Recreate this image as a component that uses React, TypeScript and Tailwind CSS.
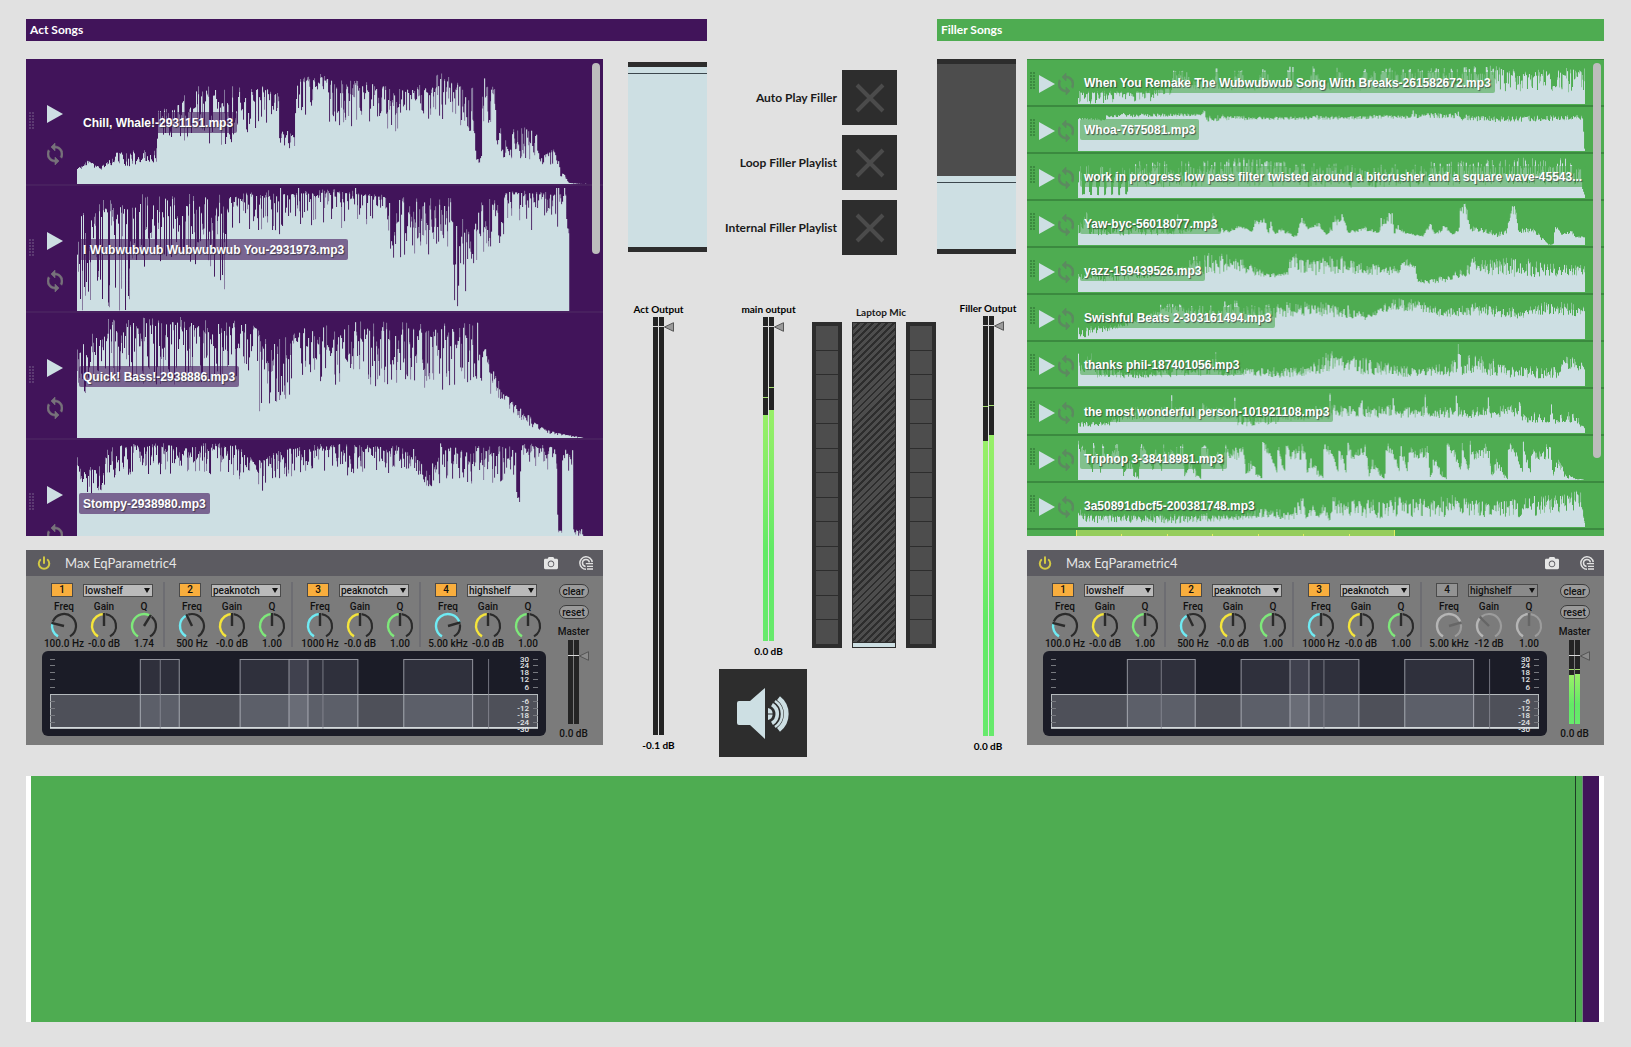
import React from "react";
import { FaCamera } from "react-icons/fa";
import { Power } from "lucide-react";

/* ---------- waveforms ---------- */

// [x, lowest level, highest level, dip rarity]
type Point = [number, number, number, number?];

function noise(seed: number) {
  let s = seed * 7919 + 13;
  return () => {
    s = (s * 1664525 + 1013904223) % 4294967296;
    return s / 4294967296;
  };
}

function Waveform({ points, seed, w, h, rarity, className }: { points: Point[]; seed: number; w: number; h: number; rarity: number; className: string }) {
  const rnd = noise(seed);
  const step = 2.53;
  let solid = `M0 ${h}`;
  let soft = `M0 ${h}`;
  let k = 0;
  for (let x = 0; x < w; x += step) {
    while (k < points.length - 2 && points[k + 1][0] <= x) k++;
    const a = points[k];
    const b = points[k + 1];
    const t = b[0] === a[0] ? 1 : Math.min(1, Math.max(0, (x - a[0]) / (b[0] - a[0])));
    const lo = a[1] + (b[1] - a[1]) * t;
    const hi = a[2] + (b[2] - a[2]) * t;
    const r = Math.pow(rnd(), a[3] ?? rarity);
    const spike = hi > h * 0.2 && rnd() > 0.975 ? 1.1 : 1;
    const level = Math.min(h, (hi - (hi - lo) * (0.08 + 0.92 * r)) * spike);
    const haze = level + Math.max(0, hi - level) * (rnd() > 0.6 ? rnd() : 0);
    const x1 = x.toFixed(1);
    const x2 = Math.min(w, x + step).toFixed(1);
    solid += `L${x1} ${(h - level).toFixed(1)}L${x2} ${(h - level).toFixed(1)}`;
    soft += `L${x1} ${(h - haze).toFixed(1)}L${x2} ${(h - haze).toFixed(1)}`;
  }
  return (
    <svg className={className} viewBox={`0 0 ${w} ${h}`} preserveAspectRatio="none" aria-hidden="true">
      <path d={`${soft}L${w} ${h}Z`} fill="#cddfe3" opacity="0.5" />
      <path d={`${solid}L${w} ${h}Z`} fill="#cddfe3" />
    </svg>
  );
}

type Song = { title: string; points: Point[] };

const actSongs: Song[] = [
  {
    title: "Chill, Whale!-2931151.mp3",
    points: [
      [0, 35, 50], [28, 55, 72], [58, 40, 50], [80, 55, 72], [100, 50, 100, 0.7], [202, 60, 110, 0.7], [203, 140, 225], [250, 140, 230],
      [254, 130, 290, 1.2], [400, 110, 300, 1.2], [410, 200, 290], [440, 110, 290], [470, 200, 300], [508, 120, 280], [512, 100, 155], [549, 105, 150],
      [552, 210, 310], [608, 190, 335], [680, 170, 310], [765, 180, 310], [805, 150, 280], [808, 100, 290], [818, 130, 290], [822, 220, 290],
      [885, 180, 300], [898, 220, 340], [904, 220, 369], [910, 200, 340], [1000, 150, 290], [1008, 60, 75], [1022, 60, 80], [1025, 160, 300], [1057, 200, 290],
      [1060, 70, 150], [1075, 70, 180, 0.8], [1165, 60, 180, 1], [1168, 50, 80], [1205, 60, 105], [1217, 50, 75], [1222, 22, 35], [1232, 20, 30],
      [1240, 4, 8], [1250, 1, 3], [1265, 0, 1], [1300, 0, 0],
    ],
  },
  {
    title: "I Wubwubwub Wubwubwub You-2931973.mp3",
    points: [
      [0, 0, 305, 1.4], [40, 0, 330, 1.4], [140, 0, 350, 1.4], [142, 130, 350, 1], [280, 140, 365, 1.1], [376, 60, 360, 2.2], [378, 250, 355, 1.8],
      [470, 230, 365, 2], [500, 180, 360, 2], [525, 250, 360, 2.5], [655, 250, 366, 3], [780, 240, 350, 2], [785, 150, 350, 1.1], [945, 180, 340, 1.2],
      [948, 0, 335, 1.3], [990, 40, 250, 1], [992, 120, 210, 1], [1020, 170, 340, 0.9], [1078, 150, 340, 1.1], [1082, 240, 368, 2.4], [1236, 240, 355, 2],
      [1238, 230, 260], [1243, 230, 250], [1244, 0, 0], [1300, 0, 0],
    ],
  },
  {
    title: "Quick! Bass!-2938886.mp3",
    points: [
      [0, 120, 280], [30, 120, 260], [35, 170, 360, 1.2], [100, 150, 364, 1.3], [440, 170, 364, 1.5], [452, 180, 360], [462, 60, 300, 1.1],
      [500, 100, 300, 0.9], [540, 110, 310, 1.2], [565, 180, 345, 1.1], [710, 130, 350, 1.2], [850, 160, 350, 1.1], [880, 130, 345, 1.2], [1000, 170, 345, 1.1],
      [1018, 160, 330], [1045, 120, 230], [1070, 110, 160], [1100, 70, 110], [1135, 45, 80], [1160, 22, 45], [1185, 15, 26], [1235, 4, 10], [1276, 0, 2],
      [1280, 0, 0], [1300, 0, 0],
    ],
  },
  {
    title: "Stompy-2938980.mp3",
    points: [
      [0, 280, 325], [12, 220, 290], [60, 210, 300], [80, 240, 360, 1.2], [110, 270, 366, 1.8], [400, 270, 366, 1.8], [430, 230, 330], [470, 220, 320],
      [520, 260, 355, 1.6], [600, 260, 364, 1.7], [820, 270, 362, 1.7], [850, 240, 330], [900, 230, 310], [930, 240, 362, 1.3], [1108, 240, 362, 1.6],
      [1110, 180, 230], [1120, 190, 240], [1122, 280, 366, 1.8], [1212, 280, 360], [1215, 85, 105], [1226, 85, 105], [1227, 280, 350], [1253, 280, 350],
      [1255, 85, 105], [1281, 85, 115], [1283, 0, 0], [1300, 0, 0],
    ],
  },
];

const pulses = (from: number, to: number, gap: number, lo: number, hi: number, top: number): Point[] => {
  const out: Point[] = [];
  for (let x = from; x < to; x += gap) out.push([x, lo, hi], [x + gap * 0.6, lo, hi], [x + gap * 0.65, lo + 10, top], [x + gap * 0.95, lo + 10, top]);
  return out;
};

const beats = (from: number, to: number): Point[] => {
  const out: Point[] = [];
  for (let x = from; x < to; x += 155) {
    out.push([x, 90, 118], [x + 18, 70, 95], [x + 36, 20, 30], [x + 38, 80, 120], [x + 43, 60, 90], [x + 56, 20, 25], [x + 59, 80, 120], [x + 70, 60, 85]);
    out.push([x + 95, 60, 110], [x + 108, 60, 110], [x + 113, 8, 12], [x + 120, 20, 75], [x + 130, 30, 60], [x + 142, 6, 30], [x + 154, 2, 4]);
  }
  return out;
};

const fillerSongs: Song[] = [
  {
    title: "When You Remake The Wubwubwub Song With Breaks-261582672.mp3",
    points: [
      [0, 0, 40, 1.8], [170, 2, 40, 1.6], [232, 20, 50], [240, 50, 110], [255, 60, 120], [275, 60, 118], [280, 45, 70], ...pulses(290, 720, 64, 40, 70, 120),
      [740, 40, 110, 1], [900, 50, 112, 1], [1040, 40, 118, 1.2], [1120, 35, 100, 1.2], [1280, 35, 112, 1.2],
    ],
  },
  {
    title: "Whoa-7675081.mp3",
    points: [
      [0, 94, 100], [68, 90, 96], [70, 100, 112], [310, 104, 114], [318, 105, 126], [324, 88, 114], [440, 92, 104], [680, 94, 106], [870, 98, 114],
      [950, 98, 116], [957, 105, 128], [970, 90, 108], [1080, 86, 106], [1272, 92, 108], [1275, 60, 60], [1278, 0, 0], [1280, 0, 0],
    ],
  },
  {
    title: "work in progress low pass filter twisted around a bitcrusher and a square wave-45543...",
    points: [
      ...[0, 1, 2, 3, 4, 5, 6].flatMap((i): Point[] => [[i * 18, 40, 100], [i * 18 + 9, 50, 105], [i * 18 + 10, 8, 12], [i * 18 + 15, 8, 12]]),
      [126, 30, 110, 0.9], [420, 35, 122, 0.9], [700, 30, 100, 0.9], [960, 35, 112, 0.9], [1200, 40, 125, 0.9], [1268, 40, 105], [1272, 20, 30], [1280, 4, 6],
    ],
  },
  {
    title: "Yaw-byc-56018077.mp3",
    points: [
      [0, 30, 110], [6, 40, 60], [22, 60, 110], [28, 30, 60], [100, 25, 60], [240, 30, 60], [250, 40, 110], [256, 30, 50], [330, 40, 80], [340, 60, 110],
      [352, 35, 60], [380, 35, 45], [405, 50, 60], [440, 38, 42], [445, 60, 84], [470, 65, 84], [480, 30, 40], [486, 60, 75], [495, 28, 34], [510, 40, 55],
      [550, 20, 28], [563, 70, 90], [580, 45, 52], [608, 55, 70], [625, 28, 32], [645, 45, 90], [668, 70, 98], [680, 35, 40], [725, 40, 60], [760, 35, 40],
      [765, 55, 100], [792, 60, 100], [797, 30, 40], [807, 45, 65], [820, 35, 42], [870, 22, 28], [888, 55, 72], [900, 28, 35], [928, 45, 62], [945, 28, 32],
      [960, 40, 60], [965, 80, 130], [980, 80, 126], [990, 40, 60], [1060, 22, 40], [1080, 30, 45], [1086, 70, 125], [1104, 80, 120], [1112, 35, 55],
      [1150, 35, 50], [1175, 8, 20], [1186, 0, 3], [1199, 0, 2], [1203, 45, 72], [1220, 28, 34], [1243, 35, 50], [1255, 22, 26], [1280, 20, 26],
    ],
  },
  {
    title: "yazz-159439526.mp3",
    points: [
      [0, 40, 70], [60, 30, 60], [270, 50, 80], [285, 55, 110], [320, 50, 120], [400, 60, 110], [440, 45, 80], [480, 42, 58], [525, 45, 60], [535, 60, 118],
      [600, 50, 105], [660, 55, 110], [740, 50, 90], [810, 50, 75], [820, 80, 108], [850, 70, 80], [856, 24, 36], [920, 26, 50], [960, 40, 68], [990, 50, 90],
      [995, 70, 128], [1005, 50, 98], [1100, 45, 108], [1200, 45, 85], [1280, 50, 92],
    ],
  },
  {
    title: "Swishful Beats 2-303161494.mp3",
    points: [
      [0, 5, 40], [20, 4, 38], [95, 30, 45], [200, 60, 90], [210, 80, 112], [300, 60, 100], [385, 65, 110], [392, 80, 128], [410, 60, 100], [500, 60, 108],
      [560, 70, 115], [640, 65, 110], [720, 55, 82], [760, 75, 95], [790, 85, 125], [860, 80, 118], [920, 65, 90], [1000, 70, 110], [1120, 60, 92],
      [1180, 75, 115], [1280, 65, 110],
    ],
  },
  {
    title: "thanks phil-187401056.mp3",
    points: [
      [0, 60, 110], [10, 30, 60], [30, 50, 110], [45, 25, 60], [150, 22, 45], [310, 30, 70], [318, 40, 105], [325, 30, 60], [345, 40, 118], [352, 30, 60],
      [420, 30, 55], [500, 24, 60], [560, 28, 55], [600, 35, 75], [635, 40, 120], [650, 45, 95], [740, 30, 85], [820, 26, 60], [900, 28, 65], [955, 28, 80],
      [959, 90, 128], [965, 50, 90], [970, 28, 50], [985, 40, 100], [1040, 30, 90], [1080, 24, 60], [1215, 22, 60], [1225, 45, 95], [1280, 40, 85],
    ],
  },
  {
    title: "the most wonderful person-101921108.mp3",
    points: [
      [0, 18, 35, 0.8], [78, 20, 35, 0.8], [80, 28, 50], [150, 40, 80], [232, 40, 80], [235, 110, 124], [238, 40, 80], [312, 40, 80], [315, 110, 124], [318, 40, 80],
      [393, 40, 80], [395, 110, 128], [398, 18, 60], [450, 20, 60], [600, 40, 80], [633, 40, 80], [635, 110, 120], [638, 45, 85], [712, 45, 85], [714, 105, 120],
      [718, 45, 80], [793, 45, 85], [795, 105, 120], [799, 45, 80], [873, 45, 80], [875, 110, 124], [879, 45, 82], [952, 45, 80], [954, 110, 126], [958, 45, 80],
      [1031, 45, 80], [1034, 100, 118], [1038, 45, 85], [1112, 50, 85], [1114, 115, 128], [1118, 30, 65], [1190, 30, 60], [1194, 80, 95], [1200, 28, 60],
      [1258, 30, 65], [1268, 18, 28], [1280, 12, 16],
    ],
  },
  { title: "Triphop 3-38418981.mp3", points: [...beats(0, 1150), [1172, 60, 118], [1190, 50, 115], [1192, 30, 40], [1215, 30, 60], [1232, 15, 22], [1255, 2, 5], [1280, 0, 2]] },
  {
    title: "3a50891dbcf5-200381748.mp3",
    points: [
      [0, 20, 60], [30, 5, 40, 1.2], [90, 14, 40], [250, 10, 42], [400, 20, 40], [460, 28, 58], [540, 20, 50], [560, 35, 100], [568, 50, 95], [575, 15, 35],
      [590, 35, 72], [605, 25, 35], [620, 40, 75], [635, 14, 24], [640, 45, 105], [655, 30, 82], [760, 25, 90, 1], [935, 30, 95, 1], [940, 50, 130],
      [945, 30, 90, 1], [1060, 28, 80, 1], [1220, 30, 100, 1], [1268, 50, 115], [1274, 25, 40], [1280, 2, 6],
    ],
  },
];

/* ---------- playlists ---------- */

function DragDots({ className }: { className: string }) {
  return (
    <svg className={`h-[17px] w-[5px] shrink-0 ${className}`} viewBox="0 0 5 17" aria-hidden="true">
      {[0, 3].map((x) => [0, 3, 6, 9, 12, 15].map((y) => <rect key={`${x}-${y}`} x={x} y={y} width="2" height="2" fill="currentColor" />))}
    </svg>
  );
}

function PlayIcon() {
  return (
    <svg className="h-[18px] w-4" viewBox="0 0 16 18" aria-hidden="true">
      <path d="M0 0L16 9L0 18Z" fill="#cddfe3" />
    </svg>
  );
}

function LoopIcon({ className }: { className: string }) {
  return (
    <svg className={`h-[22px] w-4 ${className}`} viewBox="4 1 16 22" aria-hidden="true">
      <path
        fill="currentColor"
        stroke="currentColor"
        strokeWidth="0.6"
        d="M12 4V1L8 5l4 4V6c3.31 0 6 2.69 6 6 0 1.01-.25 1.97-.7 2.8l1.46 1.46C19.54 15.03 20 13.57 20 12c0-4.42-3.58-8-8-8zm0 14c-3.31 0-6-2.69-6-6 0-1.01.25-1.97.7-2.8L5.24 7.74C4.46 8.97 4 10.43 4 12c0 4.42 3.58 8 8 8v3l4-4-4-4v3z"
      />
    </svg>
  );
}

const titleText =
  "absolute left-[2px] block h-[21px] max-w-full truncate rounded-[2px] px-1 pt-px font-['Liberation_Sans',Arial,sans-serif] text-[12px] leading-[21px] font-bold text-white [text-shadow:1px_1px_1px_rgba(40,40,50,0.7)]";

function ActPlaylist() {
  return (
    <section className="relative h-[477px] overflow-hidden bg-[#41145a]" aria-label="Act songs">
      <ul>
        {actSongs.map((song, i) => (
          <li key={song.title} className="flex h-[127px] border-b-2 border-[#48205f] pt-[2px] pr-[12px] pl-[3px]">
            <DragDots className="mt-[51px] text-[#5c3a72]" />
            <div className="flex w-[43px] shrink-0 flex-col items-start gap-5 pt-11 pl-[13px]">
              <button type="button" className="block" aria-label={`Play ${song.title}`}>
                <PlayIcon />
              </button>
              <button type="button" className="block" aria-label={`Loop ${song.title}`}>
                <LoopIcon className="text-[#77727a]" />
              </button>
            </div>
            <div className="relative h-[123px] min-w-0 flex-1">
              <Waveform points={song.points} seed={i + 3} w={1300} h={369} rarity={1.5} className="block h-full w-full" />
              <span className={`${titleText} top-[51px] bg-[#41145a]/60`}>{song.title}</span>
            </div>
          </li>
        ))}
      </ul>
      <div className="absolute top-1 right-[3px] h-[191px] w-2 rounded-full bg-[#bdbdbd]" />
    </section>
  );
}

function FillerPlaylist() {
  return (
    <section className="relative h-[477px] overflow-hidden bg-[#4eac51]" aria-label="Filler songs">
      <ul className="-mt-px">
        {fillerSongs.map((song, i) => (
          <li key={song.title} className="flex h-[47px] border-t-2 border-[#3b8a3f] pr-[19px] pl-[3px]">
            <DragDots className="mt-3 text-[#3b8a3f]" />
            <div className="flex h-[43px] w-[43px] shrink-0 items-center gap-[3px] pt-1 pl-1">
              <button type="button" className="block" aria-label={`Play ${song.title}`}>
                <PlayIcon />
              </button>
              <button type="button" className="block" aria-label={`Loop ${song.title}`}>
                <LoopIcon className="text-[#5c8a60]" />
              </button>
            </div>
            <div className="relative mt-px h-[43px] min-w-0 flex-1">
              <Waveform points={song.points} seed={i + 21} w={1280} h={129} rarity={0.7} className="block h-full w-full" />
              <span className={`${titleText} top-[11px] bg-[#4eac51]/60`}>{song.title}</span>
            </div>
          </li>
        ))}
        <li className="h-[9px] border-t-2 border-[#3b8a3f] pl-[49px]">
          <div className="flex h-[6px] w-[60.5%] justify-evenly border-x border-[#e6ee62] bg-[#96cd5c]">
            {[0, 1, 2, 3, 4, 5].map((n) => (
              <span key={n} className="mt-1 h-[2px] w-px bg-[#e6ee62]" />
            ))}
          </div>
        </li>
      </ul>
      <div className="absolute top-1 right-[3px] h-[395px] w-2 rounded-full bg-[#bdbdbd]" />
    </section>
  );
}

/* ---------- centre controls ---------- */

const futura = "font-['Lato',sans-serif] text-[#1a1a1a] whitespace-nowrap";

function LevelSlider({ className, empty, label }: { className: string; empty: string; label: string }) {
  return (
    <label className={`flex w-[79px] flex-col border-y-[5px] border-[#2d2d2d] bg-[#cddfe3] ${className}`}>
      <span className={`w-full shrink-0 bg-[#4d4d4d] ${empty}`} />
      <span className="mt-[6px] h-px w-full shrink-0 bg-[#3c474d]" />
      <input type="range" aria-label={label} className="sr-only" />
    </label>
  );
}

function Toggle({ label }: { label: string }) {
  return (
    <div className="flex items-center justify-end gap-[5px]">
      <span className={`${futura} text-[12px] leading-4 font-bold`}>{label}</span>
      <button type="button" aria-label={label} className="flex size-[55px] items-center justify-center bg-[#2d2d2d]">
        <svg className="size-[30px]" viewBox="0 0 30 30" aria-hidden="true">
          <path d="M2 2L28 28M28 2L2 28" stroke="#4b4b4b" strokeWidth="4" />
        </svg>
      </button>
    </div>
  );
}

type Bar = { peak?: number; level?: number };

function MeterBars({ bars, className, mark, marker = "#9a9a9a" }: { bars: [Bar, Bar]; className: string; mark: number; marker?: string }) {
  return (
    <div className={`relative flex w-[11px] gap-px ${className}`}>
      {bars.map((b, i) => (
        <div key={i} className="relative h-full flex-1 bg-[#242424]">
          {b.level !== undefined && (
            <div className="absolute inset-x-0 bottom-0 bg-linear-to-b from-[#98ef68] via-[#62ea66] via-60% to-[#67ea6c]" style={{ top: b.level }} />
          )}
          {b.peak !== undefined && <div className="absolute inset-x-0 h-px bg-[#a5e070]" style={{ top: b.peak }} />}
        </div>
      ))}
      <div className="absolute inset-x-0 h-px bg-[#d8d8d8]" style={{ top: mark }} />
      <svg className="absolute left-full h-[10px] w-[10px]" style={{ top: mark - 4 }} viewBox="0 0 10 10" aria-hidden="true">
        <path d="M0.5 5L9.5 0.7V9.3Z" fill={marker} stroke="#555" strokeWidth="1" />
      </svg>
    </div>
  );
}

function OutputMeter({ label, value, bars, height, className }: { label: string; value: string; bars: [Bar, Bar]; height: string; className: string }) {
  return (
    <div className={`flex flex-col items-center ${className}`}>
      <div className={`${futura} text-[10px] leading-4 font-bold text-black`}>{label}</div>
      <MeterBars bars={bars} mark={9} className={height} />
      <div className={`${futura} mt-[2px] text-[10px] leading-4 font-bold text-black`}>{value}</div>
    </div>
  );
}

function CellColumn() {
  return (
    <div className="grid h-[326px] w-[30px] grid-rows-[repeat(13,minmax(0,1fr))] gap-px border-4 border-[#2d2d2d] bg-[#2d2d2d]">
      {Array.from({ length: 13 }, (_, i) => (
        <span key={i} className="bg-[#4d4d4d]" />
      ))}
    </div>
  );
}

function SpeakerButton() {
  return (
    <button type="button" aria-label="Audio on" className="block size-[88px] bg-[#2d2d2d]">
      <svg className="size-full" viewBox="0 0 88 88" aria-hidden="true">
        <path d="M20 32H31L46 19V70L31 56H20Q18 56 18 54V34Q18 32 20 32Z" fill="#cddfe3" />
        <path d="M49 39A6.2 6.2 0 0 1 49 51Z" fill="#cddfe3" />
        <g fill="none" stroke="#cddfe3">
          <path d="M53 35.6A11 11 0 0 1 53 54.4" strokeWidth="3.6" />
          <path d="M59.5 29.2A20 20 0 0 1 59.5 60.8" strokeWidth="4.8" />
          <path d="M56 32A15.5 15.5 0 0 1 56 58" strokeWidth="2.6" />
        </g>
        <path d="M49 45H54" stroke="#2d2d2d" strokeWidth="1" />
      </svg>
    </button>
  );
}

function CenterColumn() {
  return (
    <div className="grid grid-cols-[79px_minmax(0,1fr)_79px] pr-[11px] pl-[25px]">
      <div className="flex flex-col">
        <LevelSlider label="Act level" className="mt-[3px] h-[190px]" empty="h-0" />
        <OutputMeter className="mt-[49px] pr-[18px]" label="Act Output" value="-0.1 dB" bars={[{}, {}]} height="h-[418px]" />
      </div>

      <div className="flex flex-col">
        <div className="mt-[11px] flex flex-col gap-[10px] pr-[40px]">
          <Toggle label="Auto Play Filler" />
          <Toggle label="Loop Filler Playlist" />
          <Toggle label="Internal Filler Playlist" />
        </div>
        <div className="mt-[46px] flex justify-between">
          <div className="flex flex-col gap-[10px] pl-3">
            <OutputMeter className="pl-[11px]" label="main output" value="0.0 dB" bars={[{ level: 98, peak: 80 }, { level: 93, peak: 70 }]} height="h-[324px]" />
            <SpeakerButton />
          </div>
          <div className="flex flex-col items-center gap-[2px] pt-[3px] pr-px">
            <div className={`${futura} pl-[14px] text-[10px] leading-4 font-bold`}>Laptop Mic</div>
            <div className="flex gap-[10px]">
              <CellColumn />
              <div className="flex h-[326px] w-[44px] flex-col border border-[#2d2d2d]">
                <div className="flex-1 bg-[repeating-linear-gradient(135deg,#4d4d4d_0px,#4d4d4d_3px,#2d2d2d_3px,#2d2d2d_5px)]" />
                <div className="h-[5px] border-t border-[#2d2d2d] bg-[#cddfe3]" />
              </div>
              <CellColumn />
            </div>
          </div>
        </div>
      </div>

      <div className="flex flex-col">
        <LevelSlider label="Filler level" className="h-[195px]" empty="h-[112px]" />
        <OutputMeter className="mt-[46px] pl-[23px]" label="Filler Output" value="0.0 dB" bars={[{ level: 125, peak: 90 }, { level: 119, peak: 89 }]} height="h-[420px]" />
      </div>
    </div>
  );
}

/* ---------- equalizer ---------- */

const polar = (r: number, deg: number) => {
  const a = ((deg - 90) * Math.PI) / 180;
  return `${(14 + r * Math.cos(a)).toFixed(2)} ${(14 + r * Math.sin(a)).toFixed(2)}`;
};
const arc = (from: number, to: number) => `M${polar(12, from)}A12 12 0 ${to - from > 180 ? 1 : 0} 1 ${polar(12, to)}`;

function Knob({ name, value, angle, color, off }: { name: string; value: string; angle: number; color: string; off?: boolean }) {
  const rest = off ? "#9c9c9c" : "#2b2b2b";
  return (
    <label className="flex w-10 flex-col items-center font-['Roboto',sans-serif] text-[10px] leading-[10px] font-medium whitespace-nowrap text-[#111]">
      <span>{name}</span>
      <svg className="size-7" viewBox="0 0 28 28" aria-hidden="true">
        <path d={arc(-150, angle)} fill="none" stroke={off ? "#b5b5b5" : color} strokeWidth="2.4" />
        <path d={arc(angle + 8, 150)} fill="none" stroke={rest} strokeWidth="2.2" />
        <path d={`M14 14L${polar(13, angle)}`} stroke={off ? "#666" : "#2b2b2b"} strokeWidth="2.4" />
      </svg>
      <span className="-mt-[1px]">{value}</span>
      <input type="range" className="sr-only" />
    </label>
  );
}

type Band = { type: string; off?: boolean; freq: [string, number]; gain: [string, number]; q: [string, number] };

function BandControls({ n, band }: { n: number; band: Band }) {
  return (
    <div className={`relative w-32 pl-[7px] ${n < 4 ? "after:absolute after:top-[6px] after:right-0 after:h-[65px] after:w-[2px] after:bg-[#6d6d72]" : ""}`}>
      <div className="flex items-center gap-[10px] pt-[7px] pl-[7px]">
        <button
          type="button"
          className={`h-[14px] w-[22px] border border-[#4a4a4a] font-['Roboto',sans-serif] text-[10px] leading-3 font-medium text-[#111] ${band.off ? "bg-[#939393]" : "bg-[#f9ae3d]"}`}
        >
          {n}
        </button>
        <div className="relative">
          <select
            aria-label={`Band ${n} filter type`}
            defaultValue={band.type}
            className={`block h-[13px] w-[70px] appearance-none border border-[#4a4a4a] pl-px font-['Roboto',sans-serif] text-[10px] leading-[11px] font-medium text-[#111] ${band.off ? "bg-[#8a8a8a]" : "bg-[#bababa]"}`}
          >
            <option>{band.type}</option>
          </select>
          <svg className="pointer-events-none absolute top-1 right-[3px] h-[5px] w-[6px]" viewBox="0 0 6 5" aria-hidden="true">
            <path d="M0 0H6L3 5Z" fill="#111" />
          </svg>
        </div>
      </div>
      <div className="flex pt-[5px]">
        <Knob name="Freq" value={band.freq[0]} angle={band.freq[1]} color="#6feaf3" off={band.off} />
        <Knob name="Gain" value={band.gain[0]} angle={band.gain[1]} color="#f5e53b" off={band.off} />
        <Knob name="Q" value={band.q[0]} angle={band.q[1]} color="#7ee87a" off={band.off} />
      </div>
    </div>
  );
}

function EqGraph({ low }: { low: [number, number] }) {
  const boxes: [number, number][] = [low, [190, 258], [239, 308], [354, 423]];
  const ticks = [0, 6, 13, 20, 28, 42, 49, 56, 63];
  const scale: [string, number][] = [["30", 3], ["24", 9], ["18", 16], ["12", 23], ["6", 31], ["-6", 45], ["-12", 52], ["-18", 59], ["-24", 66], ["-30", 73]];
  return (
    <div className="mr-[3px] ml-4 h-[85px] rounded-md bg-[#1b1c27] px-2 pt-2 pb-[7px]">
      <svg className="block h-[70px] w-full overflow-visible" viewBox="0 0 489 70" preserveAspectRatio="none" role="img" aria-label="Equalizer response">
        {boxes.map(([a, b]) => (
          <rect key={a} x={a + 0.5} y="0.5" width={b - a} height="68" fill="#9a9eb0" fillOpacity="0.16" stroke="#9da0a8" strokeOpacity="0.9" />
        ))}
        <rect x="0.5" y="35.5" width="488" height="34" fill="#dfe6ea" fillOpacity="0.26" stroke="#b5babd" />
        <path d="M0 68.5H489" stroke="#d5dadd" />
        <path d="M110.5 0V70M273.5 0V70M439.5 0V70" stroke="#8b8d97" strokeOpacity="0.8" />
        {ticks.map((y) => (
          <path key={y} d={`M0 ${y + 0.5}H5M484 ${y + 0.5}H489`} stroke="#77797f" />
        ))}
        {scale.map(([t, y]) => (
          <text key={t} x="480" y={y} textAnchor="end" fill="#e4e6e8" fontSize="8" fontWeight="500" fontFamily="Roboto, sans-serif">
            {t}
          </text>
        ))}
      </svg>
    </div>
  );
}

function RoundButton({ children }: { children: string }) {
  return (
    <button
      type="button"
      className="block h-[14px] w-[30px] rounded-full border border-[#3c3c3c] bg-[#9a9a9a] font-['Roboto',sans-serif] text-[10px] leading-[11px] font-medium text-[#111]"
    >
      {children}
    </button>
  );
}

function Equalizer({ bands, low, bars }: { bands: Band[]; low: [number, number]; bars: [Bar, Bar] }) {
  return (
    <section className="h-[195px] bg-[#7b7b7b]" aria-label="Max EqParametric4">
      <header className="flex h-[26px] items-center bg-[#5c5b61] pr-[10px] pl-[11px]">
        <button type="button" aria-label="Power" className="text-[#d3c944]">
          <Power className="size-[14px]" strokeWidth={3.4} />
        </button>
        <h2 className="ml-[14px] flex-1 font-['Lato',sans-serif] text-[13px] leading-[26px] text-[#e6e6e6]">Max EqParametric4</h2>
        <button type="button" aria-label="Snapshot" className="text-[#e6e6e6]">
          <FaCamera className="size-[14px]" />
        </button>
        <button type="button" aria-label="Presets" className="ml-[21px]">
          <svg className="size-[14px]" viewBox="0 0 14 14" fill="none" stroke="#e0e0e0" strokeWidth="1.5" aria-hidden="true">
            <path d="M13.2 6.2A6.2 6.2 0 1 0 7 13.2" />
            <path d="M10.4 6.4A3.5 3.5 0 1 0 6.6 10.4" />
            <path d="M6.8 7.6H14M8 10.3H14M8 13H14" strokeWidth="1.3" />
          </svg>
        </button>
      </header>
      <div className="flex">
        <div className="min-w-0 flex-1">
          <div className="flex h-[75px] justify-between pl-[11px]">
            {bands.map((band, i) => (
              <BandControls key={i} n={i + 1} band={band} />
            ))}
          </div>
          <EqGraph low={low} />
        </div>
        <div className="flex w-[54px] flex-col items-center pt-2 pr-[5px] font-['Roboto',sans-serif] text-[10px] leading-[10px] font-medium whitespace-nowrap text-[#111]">
          <RoundButton>clear</RoundButton>
          <div className="h-[7px]" />
          <RoundButton>reset</RoundButton>
          <div className="mt-2">Master</div>
          <MeterBars bars={bars} mark={15} className="mt-[3px] h-[84px]" marker="#8a8a8a" />
          <div className="mt-[5px]">0.0 dB</div>
        </div>
      </div>
    </section>
  );
}

const actBands: Band[] = [
  { type: "lowshelf", freq: ["100.0 Hz", -76], gain: ["-0.0 dB", 0], q: ["1.74", 32] },
  { type: "peaknotch", freq: ["500 Hz", -26], gain: ["-0.0 dB", 0], q: ["1.00", 0] },
  { type: "peaknotch", freq: ["1000 Hz", 0], gain: ["-0.0 dB", 0], q: ["1.00", 0] },
  { type: "highshelf", freq: ["5.00 kHz", 74], gain: ["-0.0 dB", 0], q: ["1.00", 0] },
];

const fillerBands: Band[] = [
  { type: "lowshelf", freq: ["100.0 Hz", -76], gain: ["-0.0 dB", 0], q: ["1.00", 0] },
  actBands[1],
  actBands[2],
  { type: "highshelf", off: true, freq: ["5.00 kHz", 74], gain: ["-12 dB", -46], q: ["1.00", 0] },
];

/* ---------- page ---------- */

const heading = "h-[22px] px-1 font-['Lato',sans-serif] text-[12px] leading-[21px] font-bold text-white";

export default function App() {
  return (
    <main className="min-h-screen bg-[#e1e1e1] pt-[19px] pr-[27px] pb-[25px] pl-[26px]">
      <div className="grid grid-cols-[minmax(0,1fr)_104px_230px_90px_minmax(0,1fr)]">
        <h1 className={`${heading} col-span-2 bg-[#41145a]`}>Act Songs</h1>
        <h1 className={`${heading} col-span-2 col-start-4 bg-[#4eac51]`}>Filler Songs</h1>
      </div>
      <div className="mt-[18px] grid grid-cols-[minmax(0,1fr)_424px_minmax(0,1fr)]">
        <div className="flex flex-col gap-[14px]">
          <ActPlaylist />
          <Equalizer bands={actBands} low={[90, 129]} bars={[{}, {}]} />
        </div>
        <CenterColumn />
        <div className="flex flex-col gap-[14px]">
          <FillerPlaylist />
          <Equalizer bands={fillerBands} low={[76, 144]} bars={[{ level: 35, peak: 29 }, { level: 34, peak: 29 }]} />
        </div>
      </div>
      <label className="mt-[19px] flex h-[246px] border-x-[5px] border-white bg-[#4eac51]">
        <span className="flex-1" />
        <span className="w-px bg-[#1d3b25]" />
        <span className="w-[6px]" />
        <span className="w-[17px] border-l border-[#6f8a7c] bg-[#41145a]" />
        <input type="range" aria-label="Crossfade" className="sr-only" />
      </label>
    </main>
  );
}
